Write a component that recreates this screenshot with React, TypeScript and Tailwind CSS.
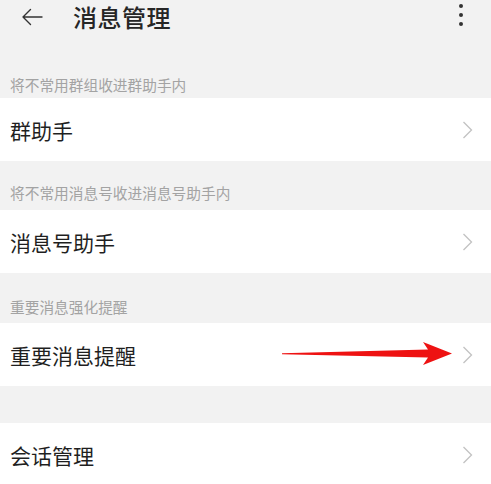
import React from 'react';

const FONT = { fontFamily: '"Noto Sans CJK SC", "Noto Sans", sans-serif' };

function Chevron() {
  return (
    <svg className="w-[11px] h-[18px] shrink-0" viewBox="0 0 11 18" fill="none" stroke="#c2c2c2" strokeWidth="1.3">
      <path d="M1.5 1 L9.5 9 L1.5 17" />
    </svg>
  );
}

function SectionLabel({ text, className }: { text: string; className: string }) {
  return (
    <div className={`flex items-end px-[10px] ${className}`}>
      <span className="text-[14.7px] leading-[20px] text-[#a3a3a3]">{text}</span>
    </div>
  );
}

function Row({ title, children }: { title: string; children?: React.ReactNode }) {
  return (
    <div className="relative flex items-center justify-between h-[63px] bg-white pl-[10px] pr-[18px]">
      <span className="text-[21px] leading-[28px] text-[#1f1f1f]">{title}</span>
      <Chevron />
      {children}
    </div>
  );
}

export default function App() {
  return (
    <div className="w-[491px] h-[484px] overflow-hidden bg-[#f2f2f2]" style={FONT}>
      {/* Header */}
      <div className="flex items-start h-[60px]">
        <div className="flex items-center h-[34px] pl-[21px]">
          <svg className="w-[22px] h-[18px]" viewBox="0 0 22 18" fill="none" stroke="#333" strokeWidth="1.4" strokeLinecap="round" strokeLinejoin="round">
            <path d="M21 9 H2 M9.5 1.5 L2 9 L9.5 16.5" />
          </svg>
          <span className="ml-[30px] text-[24px] leading-[34px] font-medium text-[#262626] tracking-[0.5px]">消息管理</span>
        </div>
        <div className="ml-auto flex flex-col items-center gap-[5px] pt-[4px] pr-[28px]">
          <span className="w-[4px] h-[4px] rounded-full bg-[#333]" />
          <span className="w-[4px] h-[4px] rounded-full bg-[#333]" />
          <span className="w-[4px] h-[4px] rounded-full bg-[#333]" />
        </div>
      </div>

      <SectionLabel text="将不常用群组收进群助手内" className="h-[38px] pb-[3px]" />
      <Row title="群助手" />

      <SectionLabel text="将不常用消息号收进消息号助手内" className="h-[49px] pb-[7px]" />
      <Row title="消息号助手" />

      <SectionLabel text="重要消息强化提醒" className="h-[50px] pb-[6px]" />
      <Row title="重要消息提醒">
        {/* red annotation arrow */}
        <svg className="absolute left-[280px] top-[17px] w-[176px] h-[26px]" viewBox="0 0 176 26">
          <path d="M2 13.2 L148 9.5 L143 2 L172 13.5 L143 25 L148 17.5 L2 14.2 Z" fill="#ee1212" />
        </svg>
      </Row>

      <div className="h-[37px]" />
      <Row title="会话管理" />
    </div>
  );
}
